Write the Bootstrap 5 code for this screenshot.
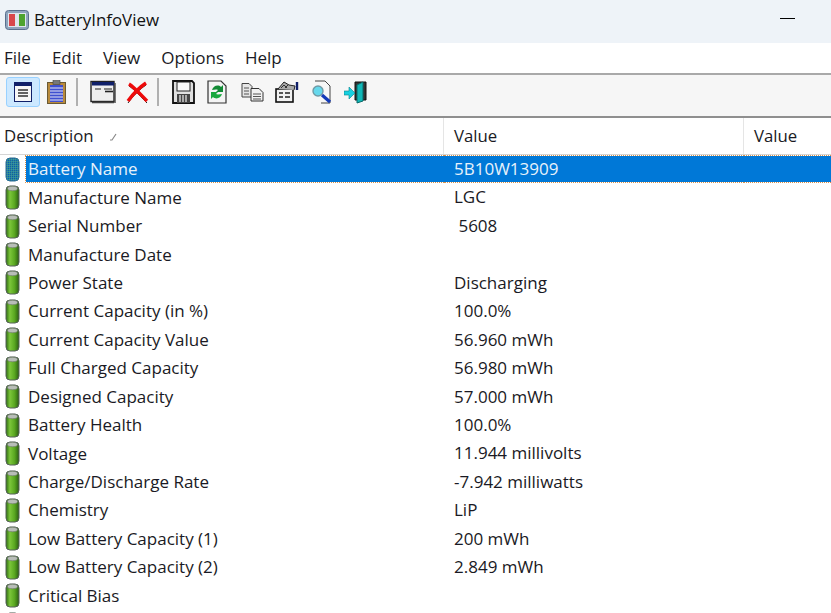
<!DOCTYPE html>
<html lang="en">
<head>
    <meta charset="UTF-8">
    <meta name="viewport" content="width=device-width, initial-scale=1.0">
    <title>BatteryInfoView</title>
    <link href="https://cdn.jsdelivr.net/npm/bootstrap@5.3.0/dist/css/bootstrap.min.css" rel="stylesheet">
    <style>
        html, body { height: 100%; overflow: hidden; }
        body { font-family: "Open Sans", "Noto Sans", sans-serif; font-size: 17px; color: #1a1a24; background: #fff; }
        .app-title { height: 43px; background: #eef3f8; padding: 0 0 4px 5px; gap: 5px; font-size: 16.9px; color: #111; }
        .app-min { width: 15px; height: 1px; background: #000; margin: -2px 36px 0 auto; }
        .app-menu { height: 30px; gap: 21px; padding-left: 4px; }
        .app-tools { height: 45px; background: #f6f6f6; border-top: 2px solid #a9a9a9; border-bottom: 2px solid #8f8f8f; }
        .app-tools svg { margin-top: 5px; flex: none; }
        .tool-btn { width: 34px; height: 30px; margin: 2px 0 0 6px; background: #cce8ff; border: 1px solid #99d1ff; border-radius: 3px; }
        .tool-btn svg { margin-top: 0; }
        .tool-sep { width: 2px; height: 28px; background: #b0b0b0; margin-top: 3px; flex: none; }
        .t-clip { margin-left: 7px; }
        .t-sep1 { margin-left: 10px; }
        .t-win { margin-left: 12px; }
        .t-del { margin-left: 10px; }
        .t-sep2 { margin-left: 8px; }
        .t-save { margin-left: 13px; }
        .t-sync { margin-left: 12px; }
        .t-copy { margin-left: 14px; }
        .t-prop { margin-left: 11px; }
        .t-find { margin-left: 12px; }
        .t-exit { margin-left: 11px; }
        .list-head { height: 37px; border-bottom: 1px solid #d5d5d5; font-size: 16.8px; }
        .col-a { width: 444px; flex: none; }
        .col-b { width: 300px; flex: none; }
        .list-head > div { height: 100%; padding-left: 4px; padding-top: 6px; border-right: 1px solid #e5e5e5; line-height: 24px; }
        .list-head > div:nth-child(2), .list-head > div:nth-child(3) { padding-left: 10px; }
        .sort-mark { margin-left: 15px; }
        .list-row { height: 28.45px; line-height: 27px; }
        .cell-name { padding-left: 5px; gap: 5px; }
        .name-txt { padding-left: 3px; margin-top: -1px; }
        .cell-val { padding-left: 10px; white-space: pre; }
        .is-sel .name-txt, .is-sel .cell-val, .is-sel .cell-rest { background: #0078d7; color: #e8f2fb; border-top: 1px dotted #d9914a; border-bottom: 1px dotted #d9914a; background-clip: padding-box; line-height: 26px; }
        .is-sel .name-txt { flex-grow: 1; align-self: stretch; margin-top: 0; padding-left: 2px; border-left: 1px dotted #d9914a; }
    </style>
</head>
<body>
    <svg width="0" height="0" class="position-absolute">
        <defs>
            <linearGradient id="cellGreen" x1="0" x2="1" y1="0" y2="0">
                <stop offset="0" stop-color="#2f6d12"/><stop offset=".3" stop-color="#7cc63a"/>
                <stop offset=".65" stop-color="#5aa821"/><stop offset="1" stop-color="#2b5f10"/>
            </linearGradient>
            <pattern id="cellDots" width="2" height="2" patternUnits="userSpaceOnUse">
                <rect width="2" height="2" fill="#0f79c9"/><rect width="1" height="1" fill="#5aa36a"/><rect x="1" y="1" width="1" height="1" fill="#2a6a7c"/>
            </pattern>
            <symbol id="cell" viewBox="0 0 15 25">
                <rect x="1" y="1" width="13" height="23" rx="4" fill="url(#cellGreen)" stroke="#56625a"/>
                <ellipse cx="7.5" cy="3.500" rx="5" ry="2.200" fill="#b8bdb8" stroke="#6d736d" stroke-width=".6"/>
            </symbol>
            <symbol id="cellSel" viewBox="0 0 15 25">
                <rect x="1" y="1" width="13" height="23" rx="4" fill="url(#cellDots)" stroke="#2e6f8f"/>
            </symbol>
        </defs>
    </svg>

    <div class="app-title d-flex align-items-center">
        <svg width="24" height="20" viewBox="0 0 24 20">
            <rect x=".5" y=".5" width="23" height="19" rx="3" fill="#8ea4bd" stroke="#5a6f8c"/>
            <rect x="3" y="3" width="18" height="14" fill="#dfe6ee"/>
            <rect x="4" y="4" width="6" height="12" fill="#d8484c"/>
            <rect x="14" y="4" width="6" height="12" fill="#4da32f"/>
        </svg>
        <span>BatteryInfoView</span>
        <div class="app-min"></div>
    </div>

    <div class="app-menu d-flex align-items-center">
        <span>File</span><span>Edit</span><span>View</span><span>Options</span><span>Help</span>
    </div>

    <div class="app-tools d-flex">
        <div class="tool-btn d-flex align-items-center justify-content-center">
            <svg width="18" height="20" viewBox="0 0 18 20">
                <rect x=".5" y=".5" width="17" height="19" fill="#f7f7f7" stroke="#10206a"/>
                <rect x="1" y="1" width="16" height="3" fill="#10206a"/>
                <path d="M4 8h10M4 11h10M4 14h10" stroke="#333" stroke-width="1.400"/>
            </svg>
        </div>
        <svg class="t-clip" width="19" height="25" viewBox="0 0 19 25">
            <rect x=".5" y="2.500" width="18" height="21" fill="#b98a3c" stroke="#6b5a34"/>
            <rect x="3" y="5" width="13" height="17" fill="#3f4fd0"/>
            <path d="M3 8h13M3 11h13M3 14h13M3 17h13M3 20h13" stroke="#e8e8f4"/>
            <rect x="6" y=".5" width="7" height="4" fill="#777" stroke="#444" stroke-width=".6"/>
        </svg>
        <div class="tool-sep t-sep1"></div>
        <svg class="t-win" width="26" height="24" viewBox="0 0 26 24">
            <rect x="1" y="1.500" width="23" height="20" fill="#eee" stroke="#222" stroke-width="1.400"/>
            <path d="M24 22.500H2M25 3v20" stroke="#444" stroke-width="1.400"/>
            <rect x="2" y="2" width="22" height="3.500" fill="#10206a"/>
            <path d="M5 9h6M14 9h8" stroke="#666" stroke-width="1.600"/>
            <path d="M15 11.500h8" stroke="#222" stroke-width="1.600"/>
        </svg>
        <svg class="t-del" width="23" height="24" viewBox="0 0 23 24">
            <path d="M3 4c5 3 14 13 18 17M20 3C14 7 7 14 2 21" fill="none" stroke="#222" stroke-width="1" transform="translate(0 2)"/>
            <path d="M3 4c5 3 14 13 18 17M20 3C14 7 7 14 2 21" fill="none" stroke="#ee0a0a" stroke-width="3.400"/>
        </svg>
        <div class="tool-sep t-sep2"></div>
        <svg class="t-save" width="23" height="24" viewBox="0 0 23 24">
            <path d="M1 1h19l2 2v20H1z" fill="#e0e0e0" stroke="#111" stroke-width="1.800"/>
            <rect x="5" y="2" width="13" height="9" fill="#fafafa" stroke="#222"/>
            <rect x="5" y="14" width="13" height="9" fill="#444"/>
            <path d="M8 15v7M11 15v7M14 15v7" stroke="#ccc" stroke-width="1.500"/>
        </svg>
        <svg class="t-sync" width="20" height="24" viewBox="0 0 20 24">
            <path d="M1 1h13l5 5v17H1z" fill="#f4f4f4" stroke="#333" stroke-width="1.200"/>
            <path d="M5 10c1-4 6-6 9-3l2-2v7h-7l2-2c-2-1-4 0-6 0z" fill="#118a34"/>
            <path d="M15 14c-1 4-6 6-9 3l-2 2v-7h7l-2 2c2 1 4 0 6 0z" fill="#18a83e"/>
        </svg>
        <svg class="t-copy" width="23" height="24" viewBox="0 0 23 24">
            <path d="M1 3.500h7l3 3V17H1z" fill="#e6e6e6" stroke="#444"/>
            <path d="M10 8.500h8l4 4V21H10z" fill="#f2f2f2" stroke="#333"/>
            <path d="M3 8h5M3 11h5M3 14h5M12 14h8M12 16.500h8M12 19h8" stroke="#555"/>
        </svg>
        <svg class="t-prop" width="24" height="24" viewBox="0 0 24 24">
            <rect x="1" y="9" width="17" height="13" fill="#f2f2f2" stroke="#111" stroke-width="1.600"/>
            <path d="M4 13h4M10 13h5M4 17h4M10 17h5" stroke="#222" stroke-width="1.600"/>
            <path d="M3 9l6-7 5 3 6 1-1 4" fill="#aaa" stroke="#222"/>
            <path d="M6 8l3-3 3 3M10 8l3-3" fill="none" stroke="#333"/>
            <path d="M22 2v8" stroke="#10206a" stroke-width="2.400"/>
        </svg>
        <svg class="t-find" width="22" height="25" viewBox="0 0 22 25">
            <path d="M4 1h10l5 5v17H10" fill="#f6f6f6" stroke="#444"/>
            <circle cx="7" cy="11" r="5" fill="#66d8ec" stroke="#6f9aa5" stroke-width="1.400"/>
            <path d="M11 15l8 7" stroke="#123ab8" stroke-width="3.200"/>
        </svg>
        <svg class="t-exit" width="24" height="24" viewBox="0 0 24 24">
            <path d="M11 2h11v18H11z" fill="#333" stroke="#111"/>
            <path d="M13 5l6-3v19l-6 2z" fill="#11b8b8" stroke="#0b6b6b"/>
            <path d="M0 11h5V7l6 6-6 6v-4H0z" fill="#16d0e0" stroke="#0b7f88" stroke-width=".6"/>
        </svg>
    </div>

    <div class="list-head d-flex">
        <div class="col-a">Description<svg class="sort-mark" width="9" height="9" viewBox="0 0 9 9"><path d="M7 1L3 7H1" fill="none" stroke="#888" stroke-width="1.200"/></svg></div>
        <div class="col-b">Value</div>
        <div class="flex-grow-1 border-0">Value</div>
    </div>

    <div id="rows"></div>

    <script>
        // Rows of the list (the last one is cut off by the window)
        const rows = [
            ['Battery Name', '5B10W13909'],
            ['Manufacture Name', 'LGC'],
            ['Serial Number', ' 5608'],
            ['Manufacture Date', ''],
            ['Power State', 'Discharging'],
            ['Current Capacity (in %)', '100.0%'],
            ['Current Capacity Value', '56.960 mWh'],
            ['Full Charged Capacity', '56.980 mWh'],
            ['Designed Capacity', '57.000 mWh'],
            ['Battery Health', '100.0%'],
            ['Voltage', '11.944 millivolts'],
            ['Charge/Discharge Rate', '-7.942 milliwatts'],
            ['Chemistry', 'LiP'],
            ['Low Battery Capacity (1)', '200 mWh'],
            ['Low Battery Capacity (2)', '2.849 mWh'],
            ['Critical Bias', ''],
            ['', '']
        ];
        document.getElementById('rows').innerHTML = rows.map((r, i) => `
            <div class="list-row d-flex${i === 0 ? ' is-sel' : ''}">
                <div class="col-a cell-name d-flex align-items-center">
                    <svg width="15" height="25" class="flex-shrink-0"><use href="#${i === 0 ? 'cellSel' : 'cell'}"/></svg>
                    <span class="name-txt">${r[0]}</span>
                </div>
                <div class="col-b cell-val">${r[1]}</div>
                <div class="cell-rest flex-grow-1"></div>
            </div>`).join('');
    </script>
    <script src="https://cdn.jsdelivr.net/npm/bootstrap@5.3.0/dist/js/bootstrap.bundle.min.js"></script>
</body>
</html>
